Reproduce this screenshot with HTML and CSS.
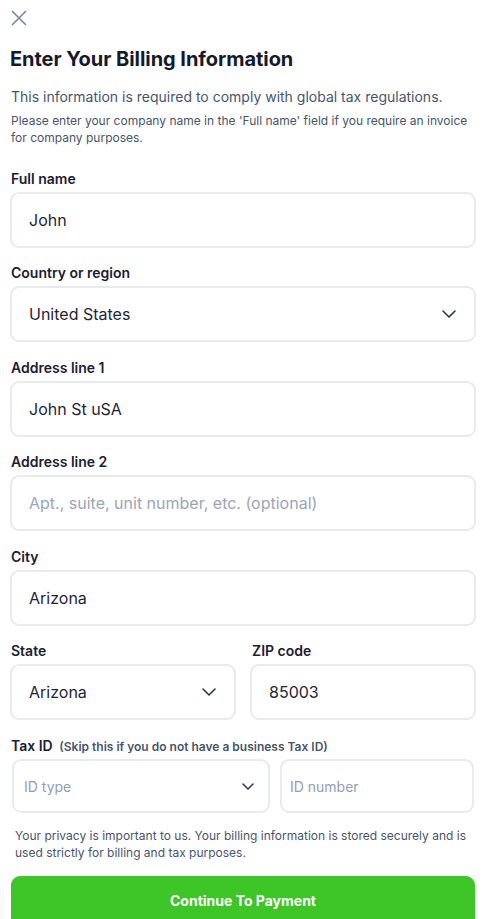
FILE: index.html
```html
<!DOCTYPE html>
<html lang="en">
<head>
<meta charset="utf-8">
<title>Billing Information</title>
<link rel="stylesheet" href="styles.css">
</head>
<body>
<div class="page">
  <button class="close" aria-label="Close">
    <svg width="16" height="16" viewBox="0 0 16 16"><path d="M1.5 1.5 L14.5 14.5 M14.5 1.5 L1.5 14.5" stroke="#7d889b" stroke-width="1.7" stroke-linecap="round" fill="none"/></svg>
  </button>
  <h1 class="title">Enter Your Billing Information</h1>
  <p class="subtitle">This information is required to comply with global tax regulations.</p>
  <p class="note">Please enter your company name in the 'Full name' field if you require an invoice for company purposes.</p>

  <form class="form">
    <div class="field">
      <label class="label">Full name</label>
      <div class="input">John</div>
    </div>
    <div class="field">
      <label class="label">Country or region</label>
      <div class="input select">
        <span>United States</span>
        <svg class="chev" width="14" height="8" viewBox="0 0 14 8"><path d="M1 1 L7 7 L13 1" stroke="#2d3648" stroke-width="1.6" fill="none" stroke-linecap="round" stroke-linejoin="round"/></svg>
      </div>
    </div>
    <div class="field">
      <label class="label">Address line 1</label>
      <div class="input">John St uSA</div>
    </div>
    <div class="field">
      <label class="label">Address line 2</label>
      <div class="input placeholder">Apt., suite, unit number, etc. (optional)</div>
    </div>
    <div class="field">
      <label class="label">City</label>
      <div class="input">Arizona</div>
    </div>
    <div class="row">
      <div class="field">
        <label class="label">State</label>
        <div class="input select">
          <span>Arizona</span>
          <svg class="chev" width="14" height="8" viewBox="0 0 14 8"><path d="M1 1 L7 7 L13 1" stroke="#2d3648" stroke-width="1.6" fill="none" stroke-linecap="round" stroke-linejoin="round"/></svg>
        </div>
      </div>
      <div class="field">
        <label class="label zip">ZIP code</label>
        <div class="input">85003</div>
      </div>
    </div>
    <div class="field tax">
      <label class="label tax-label">Tax ID <span class="hint">(Skip this if you do not have a business Tax ID)</span></label>
      <div class="tax-row">
        <div class="input small select type">
          <span class="ph">ID type</span>
          <svg class="chev" width="12" height="7" viewBox="0 0 12 7"><path d="M1 1 L6 6 L11 1" stroke="#2d3648" stroke-width="1.5" fill="none" stroke-linecap="round" stroke-linejoin="round"/></svg>
        </div>
        <div class="input small number"><span class="ph">ID number</span></div>
      </div>
    </div>
  </form>

  <p class="privacy">Your privacy is important to us. Your billing information is stored securely and is used strictly for billing and tax purposes.</p>
  <button class="pay">Continue To Payment</button>
</div>
</body>
</html>
```
FILE: styles.css
```css
* { box-sizing: border-box; }
html, body { margin: 0; padding: 0; background: #ffffff; }
body {
  font-family: Inter, "Noto Sans", "Liberation Sans", sans-serif;
  color: #1a2030;
  overflow: hidden;
}
.page {
  padding: 10px 13px 0 10px;
  display: flex;
  flex-direction: column;
}
.close {
  width: 18px;
  height: 18px;
  padding: 0;
  margin: 0 0 0 1px;
  border: 0;
  background: none;
  display: flex;
  align-items: flex-start;
}
.title {
  margin: 17px 0 0 0;
  font-size: 20px;
  line-height: 28px;
  font-weight: 700;
  color: #141a2b;
  letter-spacing: -0.05px;
}
.subtitle {
  margin: 13px 0 0 1px;
  font-size: 14px;
  line-height: 22px;
  color: #4a5468;
}
.note {
  margin: 4px 0 0 1px;
  font-size: 12px;
  line-height: 17px;
  color: #4a5468;
}
.form {
  margin-top: 23px;
  display: flex;
  flex-direction: column;
  gap: 15.4px;
}
.field {
  display: flex;
  flex-direction: column;
  min-width: 0;
}
.field.tax { margin-top: 0.8px; }
.label {
  font-size: 14px;
  line-height: 20px;
  font-weight: 600;
  color: #1a2030;
  margin: 0 0 3px 1px;
}
.label.zip { margin-left: 2px; }
.label.tax-label { margin-bottom: 2px; }
.hint {
  font-size: 12px;
  font-weight: 600;
  color: #4a5468;
  margin-left: 3px;
}
.input {
  height: 56px;
  border: 2px solid #e7eaef;
  border-radius: 9px;
  padding: 0 18px 0 17px;
  display: flex;
  align-items: center;
  justify-content: space-between;
  font-size: 16px;
  color: #1f2535;
  background: #fff;
}
.input.placeholder { color: #9ba5b6; }
.row {
  display: grid;
  grid-template-columns: 1fr 1fr;
  gap: 14px;
}
.tax-row {
  display: grid;
  grid-template-columns: 258px 1fr;
  gap: 10px;
  padding: 0 2px;
}
.input.small {
  height: 54px;
  font-size: 14px;
  padding: 0 14px 0 10px;
}
.input.small.number { padding-left: 8px; }
.ph { color: #939eb2; }
.privacy {
  margin: 14px 0 0 5px;
  font-size: 12px;
  line-height: 17px;
  color: #4a5468;
}
.pay {
  margin: 15px 1px 0 1px;
  height: 56px;
  border: 0;
  border-radius: 9px;
  background: #3ec528;
  color: #ffffff;
  font-family: Inter, "Noto Sans", "Liberation Sans", sans-serif;
  font-size: 14px;
  font-weight: 700;
  padding: 0 0 8px 0;
}
```
